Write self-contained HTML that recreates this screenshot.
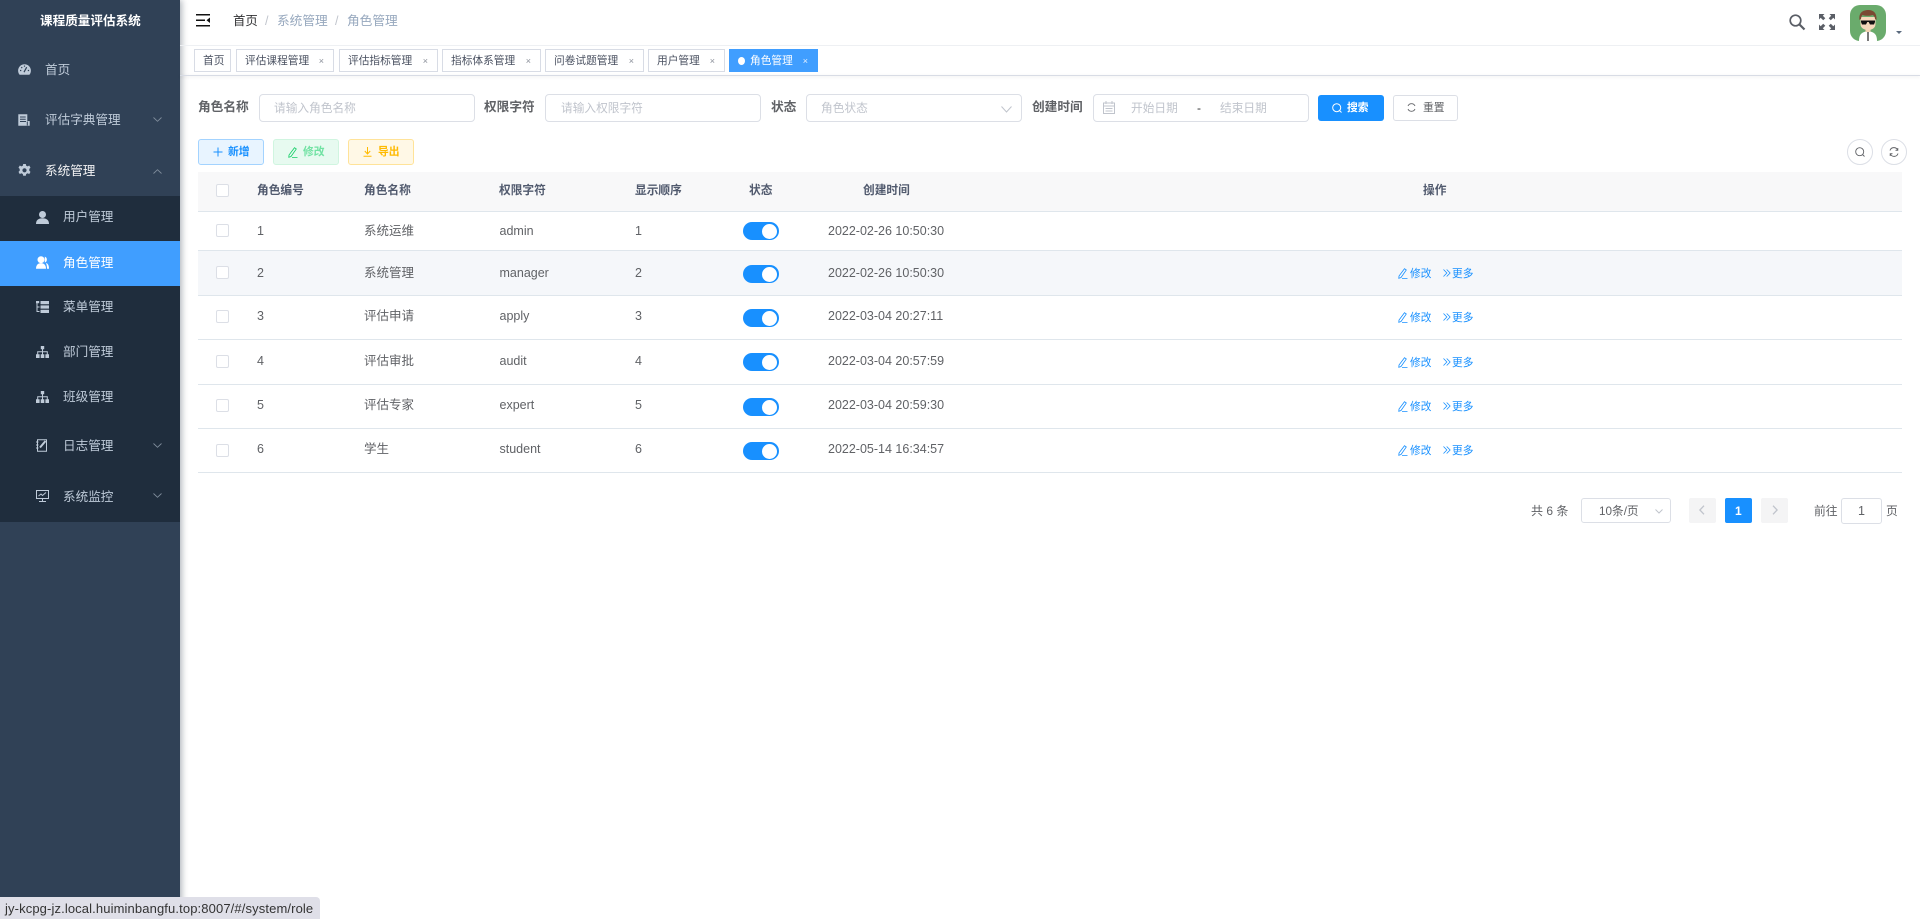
<!DOCTYPE html>
<html lang="zh-CN"><head><meta charset="utf-8"><title>角色管理</title>
<style>
html,body{margin:0;padding:0;width:1920px;height:919px;overflow:hidden;background:#fff}
body{position:relative;font-family:"Liberation Sans","Noto Sans CJK SC",sans-serif;color:#606266;font-size:12.5px}
.a{position:absolute;box-sizing:border-box}
.t{position:absolute;white-space:nowrap;line-height:20px;height:20px}
svg{position:absolute;overflow:visible}
.m{color:#bfcbd9;font-size:12.6px}
.tag{position:absolute;top:49px;height:23px;border:1px solid #d8dce5;background:#fff;color:#495060;font-size:10.7px;line-height:22px;white-space:nowrap;padding-left:8px;box-sizing:border-box}
.x{position:absolute;right:9px;top:0;font-size:9px;color:#8a8f99}
.lb{font-weight:bold;color:#606266;font-size:12.7px}
.inp{position:absolute;border:1px solid #dcdfe6;border-radius:4px;background:#fff;box-sizing:border-box}
.ph{color:#c0c4cc;font-size:11.7px}
.th{font-weight:bold;color:#515a6e;font-size:11.7px}
.ln{position:absolute;left:198px;width:1704px;height:1px;background:#dfe6ec}
.cb{position:absolute;left:216px;width:13px;height:13px;border:1px solid #dcdfe6;border-radius:2px;background:#fff;box-sizing:border-box}
.sw{position:absolute;left:743px;width:36px;height:18px;border-radius:9px;background:#1890ff}
.sw i{position:absolute;left:19px;top:1.5px;width:15px;height:15px;border-radius:50%;background:#fff}
.op{color:#1890ff;font-size:10.7px}
.pg{position:absolute;top:498px;width:27px;height:25px;border-radius:2px;background:#f4f4f5}
</style></head><body>

<!-- sidebar -->
<div class="a" style="left:0;top:0;width:180px;height:919px;background:#304156;box-shadow:2px 0 6px rgba(0,21,41,.3)"></div>
<div class="a" style="left:0;top:196px;width:180px;height:326px;background:#1f2d3d"></div>
<div class="a" style="left:0;top:241px;width:180px;height:45px;background:#409eff"></div>
<div class="t" style="left:40px;top:11px;color:#fff;font-weight:bold;font-size:12.6px">课程质量评估系统</div>

<svg style="left:18px;top:64px" width="13" height="11" viewBox="0 0 13 11"><path fill="#bfcbd9" d="M6.500.2A6.400 6.400 0 0 0 .1 6.600c0 1.600.5 3 1.500 4.200h9.800c1-1.200 1.500-2.600 1.500-4.200A6.400 6.400 0 0 0 6.500.2z"/><path stroke="#304156" stroke-width="1.200" fill="none" d="M6 8.200 8.700 3.200M2 6.500h1.300M9.800 6.500h1.300M3.300 3.200l.9.9M6.500 1.500v1.300"/></svg>
<div class="t m" style="left:45px;top:60px">首页</div>

<svg style="left:18px;top:114px" width="12" height="12" viewBox="0 0 12 12"><path fill="#bfcbd9" d="M.3.3h9v6.700h2.400v4.700H.3z"/><path stroke="#304156" stroke-width="1" fill="none" d="M2 3h5.700M2 5.200h5.700M2 7.500h6M9.300 7.500v4"/></svg>
<div class="t m" style="left:45px;top:110px">评估字典管理</div>
<svg style="left:153px;top:117px" width="9" height="5" viewBox="0 0 9 5"><path d="M.5.5l4 3.8 4-3.8" fill="none" stroke="#7f8c9b" stroke-width=".9"/></svg>

<svg style="left:18px;top:164px" width="13" height="13" viewBox="0 0 13 13"><path fill="#bfcbd9" fill-rule="evenodd" d="M5.200 0h2.600l.4 1.700 1.500.7 1.500-.9 1.300 2.200-1.200 1.200v1.800l1.200 1.200-1.300 2.200-1.500-.9-1.500.8-.4 1.700H5.200l-.4-1.700-1.500-.8-1.500.9L.5 7.900l1.200-1.200V4.900L.5 3.700l1.300-2.200 1.500.9 1.500-.7zM6.500 4.200a2.100 2.100 0 1 0 0 4.200 2.100 2.100 0 0 0 0-4.200z"/></svg>
<div class="t m" style="left:45px;top:161px;color:#f4f4f5">系统管理</div>
<svg style="left:153px;top:169px" width="9" height="5" viewBox="0 0 9 5"><path d="M.5 4.500l4-3.800 4 3.800" fill="none" stroke="#7f8c9b" stroke-width=".9"/></svg>

<svg style="left:36px;top:211px" width="13" height="13" viewBox="0 0 13 13"><circle cx="6.500" cy="3.500" r="3.500" fill="#bfcbd9"/><path fill="#bfcbd9" d="M0 13c0-3.800 2.200-5.800 6.500-5.800S13 9.200 13 13z"/></svg>
<div class="t m" style="left:63px;top:207px">用户管理</div>

<svg style="left:36px;top:256px" width="13" height="13" viewBox="0 0 13 13"><circle cx="5" cy="3.700" r="3.500" fill="#fff"/><path fill="#fff" d="M0 12.800c0-3.600 1.800-5.700 5-5.700s5 2.100 5 5.700z"/><path fill="#fff" d="M8.800.6a3.200 3.200 0 0 1 0 6zM10 7c2.100.5 3 2.700 3 5.800h-2c0-2.200-.4-4.300-1-5.800z"/></svg>
<div class="t" style="left:63px;top:253px;color:#fff;font-size:12.6px">角色管理</div>

<svg style="left:36px;top:301px" width="13" height="12" viewBox="0 0 13 12"><path fill="#bfcbd9" d="M0 0h3.200v2.200H0zM4.500 0H13v3.200H4.500zM4.500 4.400H13v3.200H4.500zM4.500 8.800H13V12H4.500z"/><path stroke="#bfcbd9" fill="none" d="M1 2v8.500h2.500M1 6h2.500"/></svg>
<div class="t m" style="left:63px;top:297px">菜单管理</div>

<svg style="left:36px;top:346px" width="13" height="12" viewBox="0 0 13 12"><path fill="#bfcbd9" d="M4.800 0h3.400v3.200H4.800zM0 8.300h3.600V12H0zM4.700 8.300h3.600V12H4.700zM9.400 8.300H13V12H9.400z"/><path stroke="#bfcbd9" fill="none" d="M6.500 3v5.500M1.700 8.500V5.700h9.600v2.800"/></svg>
<div class="t m" style="left:63px;top:342px">部门管理</div>

<svg style="left:36px;top:391px" width="13" height="12" viewBox="0 0 13 12"><path fill="#bfcbd9" d="M4.800 0h3.400v3.200H4.800zM0 8.300h3.600V12H0zM4.700 8.300h3.600V12H4.700zM9.400 8.300H13V12H9.400z"/><path stroke="#bfcbd9" fill="none" d="M6.500 3v5.500M1.700 8.500V5.700h9.600v2.800"/></svg>
<div class="t m" style="left:63px;top:387px">班级管理</div>

<svg style="left:36px;top:439px" width="12" height="13" viewBox="0 0 12 13"><path fill="none" stroke="#bfcbd9" d="M1.500.7h9v11.600h-9z"/><path stroke="#bfcbd9" stroke-width="2" d="M4 8.500 9.500 2"/><path stroke="#bfcbd9" d="M0 3h2.500M0 6h2.500M0 9h2.500"/></svg>
<div class="t m" style="left:63px;top:436px">日志管理</div>
<svg style="left:153px;top:443px" width="9" height="5" viewBox="0 0 9 5"><path d="M.5.500l4 3.800 4-3.800" fill="none" stroke="#7f8c9b" stroke-width=".9"/></svg>

<svg style="left:36px;top:490px" width="13" height="12" viewBox="0 0 13 12"><path fill="none" stroke="#bfcbd9" d="M.5.500h12v8h-12zM6.500 8.500V11.500M3 11.500h7"/><path fill="none" stroke="#bfcbd9" d="M2.500 6 5 4l1.500 1.500L10 2.500"/></svg>
<div class="t m" style="left:63px;top:487px">系统监控</div>
<svg style="left:153px;top:493px" width="9" height="5" viewBox="0 0 9 5"><path d="M.5.500l4 3.800 4-3.800" fill="none" stroke="#7f8c9b" stroke-width=".9"/></svg>

<!-- navbar -->
<svg style="left:196px;top:14px" width="14" height="13" viewBox="0 0 14 13"><path fill="#111" d="M0 0h14v1.500H0zM0 5.500h9V7H0zM0 11h14v1.500H0z"/><path fill="#111" d="M14 3.500v5.500l-3.500-2.750z"/></svg>
<div class="t" style="left:233px;top:11px;color:#303133;font-size:12.4px">首页</div>
<div class="t" style="left:265px;top:11px;color:#c0c4cc;font-size:12.5px">/</div>
<div class="t" style="left:277px;top:11px;color:#97a8be;font-size:12.7px">系统管理</div>
<div class="t" style="left:335px;top:11px;color:#c0c4cc;font-size:12.5px">/</div>
<div class="t" style="left:347px;top:11px;color:#97a8be;font-size:12.7px">角色管理</div>

<svg style="left:1789px;top:14px" width="16" height="16" viewBox="0 0 16 16"><circle cx="6.500" cy="6.500" r="5.300" fill="none" stroke="#5a5e66" stroke-width="1.700"/><path d="M10.500 10.500 15.500 15.500" stroke="#5a5e66" stroke-width="2.200"/></svg>
<svg style="left:1819px;top:14px" width="16" height="16" viewBox="0 0 16 16"><g fill="#5a5e66"><path d="M0 0h5.500L3.800 1.700 6.300 4.200 4.200 6.300 1.700 3.800 0 5.500zM16 0v5.500L14.300 3.800 11.800 6.300 9.700 4.200 12.200 1.700 10.500 0zM0 16v-5.500L1.700 12.200 4.200 9.700 6.300 11.800 3.800 14.300 5.500 16zM16 16h-5.500L12.200 14.300 9.700 11.800 11.800 9.700 14.300 12.200 16 10.500z"/></g></svg>
<svg style="left:1850px;top:5px" width="36" height="36" viewBox="0 0 36 36">
<rect width="36" height="36" rx="10" fill="#6aab6c"/>
<path fill="#fff" d="M9 36c0-7 3-9 9-10 6 1 9 3 9 10z"/><path stroke="#222" stroke-width="1.200" d="M18 27v9"/>
<rect x="15.500" y="20" width="5" height="7" fill="#f4d3b3"/>
<path fill="#f6d8bb" d="M10.500 12h15v7c0 4-3.500 6-7.500 6s-7.500-2-7.500-6z"/>
<path fill="#7a4a32" d="M9.500 15c-1-7 3-10 9-10 5 0 8.500 3 8 10l-1.500-1c0-2-1-3.500-2.500-4-3 1-7 1-10 0-1 1-1.500 3-1.500 4z"/>
<path fill="#111" d="M11 15.500h14v1.500l-1 2.500h-4l-1.300-2.500h-1.400L16 19.500h-4l-1-2.500z"/>
</svg>
<svg style="left:1896px;top:31px" width="6" height="3" viewBox="0 0 6 3"><path fill="#5a6a7e" d="M0 0h6L3 3z"/></svg>
<div class="a" style="left:180px;top:45px;width:1740px;height:1px;background:#eef0f3"></div>

<!-- tags -->
<div class="a" style="left:180px;top:75px;width:1740px;height:1px;background:#d8dce5;box-shadow:0 1px 3px rgba(0,0,0,.12)"></div>
<div class="tag" style="left:194px;width:37px">首页</div>
<div class="tag" style="left:236px;width:98px">评估课程管理<span class="x">×</span></div>
<div class="tag" style="left:339px;width:99px">评估指标管理<span class="x">×</span></div>
<div class="tag" style="left:442px;width:99px">指标体系管理<span class="x">×</span></div>
<div class="tag" style="left:545px;width:99px">问卷试题管理<span class="x">×</span></div>
<div class="tag" style="left:648px;width:77px">用户管理<span class="x">×</span></div>
<div class="tag" style="left:729px;width:89px;background:#409eff;border-color:#409eff;color:#fff;padding-left:20px"><span class="a" style="left:8px;top:7px;width:7px;height:8px;border-radius:50%;background:#fff"></span>角色管理<span class="x" style="color:#e6f1ff">×</span></div>

<!-- search form -->
<div class="t lb" style="left:198px;top:97px">角色名称</div>
<div class="inp" style="left:259px;top:94px;width:216px;height:28px"></div>
<div class="t ph" style="left:274px;top:98px;margin-top:1px">请输入角色名称</div>
<div class="t lb" style="left:484px;top:97px">权限字符</div>
<div class="inp" style="left:545px;top:94px;width:216px;height:28px"></div>
<div class="t ph" style="left:561px;top:98px;margin-top:1px">请输入权限字符</div>
<div class="t lb" style="left:771px;top:97px">状态</div>
<div class="inp" style="left:806px;top:94px;width:216px;height:28px"></div>
<div class="t ph" style="left:821px;top:98px;margin-top:1px">角色状态</div>
<svg style="left:1001px;top:106px" width="11" height="7" viewBox="0 0 11 7"><path d="M.5.500 5.500 6l5-5.500" fill="none" stroke="#c0c4cc"/></svg>
<div class="t lb" style="left:1032px;top:97px">创建时间</div>
<div class="inp" style="left:1093px;top:94px;width:216px;height:28px"></div>
<svg style="left:1103px;top:101px" width="12" height="13" viewBox="0 0 12 13"><path fill="none" stroke="#c0c4cc" d="M.5 2h11v10.500H.5zM.5 5h11M3 0v3M9 0v3M2.500 7.500h7M2.500 10h7"/></svg>
<div class="t ph" style="left:1131px;top:98px;margin-top:1px">开始日期</div>
<div class="t" style="left:1197px;top:98px;color:#303133;font-size:12px">-</div>
<div class="t ph" style="left:1220px;top:98px;margin-top:1px">结束日期</div>

<div class="a" style="left:1318px;top:95px;width:66px;height:26px;background:#1890ff;border-radius:3px"></div>
<svg style="left:1332px;top:103px" width="10" height="10" viewBox="0 0 10 10"><circle cx="4.700" cy="4.700" r="4" fill="none" stroke="#fff"/><path d="M7.500 7.500 9.500 9.500" stroke="#fff"/></svg>
<div class="t" style="left:1347px;top:98px;color:#fff;font-weight:bold;font-size:10.800px">搜索</div>
<div class="a" style="left:1393px;top:95px;width:65px;height:26px;background:#fff;border:1px solid #dcdfe6;border-radius:3px"></div>
<svg style="left:1407px;top:103px" width="9" height="9" viewBox="0 0 9 9"><path d="M1 3A3.800 3.800 0 0 1 8 3M8 6A3.800 3.800 0 0 1 1 6" fill="none" stroke="#606266" stroke-width=".9"/></svg>
<div class="t" style="left:1423px;top:98px;color:#606266;font-size:10.800px">重置</div>

<!-- toolbar -->
<div class="a" style="left:198px;top:139px;width:66px;height:26px;background:#e8f4ff;border:1px solid #a3d3ff;border-radius:3px"></div>
<svg style="left:213px;top:147px" width="10" height="10" viewBox="0 0 10 10"><path d="M5 .500v9M.500 5h9" stroke="#1890ff"/></svg>
<div class="t" style="left:228px;top:142px;color:#1890ff;font-weight:bold;font-size:10.800px">新增</div>
<div class="a" style="left:273px;top:139px;width:66px;height:26px;background:#e7faf0;border:1px solid #d0f5e0;border-radius:3px"></div>
<svg style="left:288px;top:147px" width="10" height="11" viewBox="0 0 10 11"><path d="M6.500.700 8.300 2 3 9.500.800 10.300 1 8zM4 10.400h5.500" fill="none" stroke="#13ce66" stroke-width=".8"/></svg>
<div class="t" style="left:303px;top:142px;color:#71e2a3;font-weight:bold;font-size:10.800px">修改</div>
<div class="a" style="left:348px;top:139px;width:66px;height:26px;background:#fff8e6;border:1px solid #ffe399;border-radius:3px"></div>
<svg style="left:363px;top:147px" width="9" height="10" viewBox="0 0 9 10"><path d="M4.500 0v6.500M1.800 4 4.500 7 7.200 4M.500 9.300h8" fill="none" stroke="#ffba00"/></svg>
<div class="t" style="left:378px;top:142px;color:#ffba00;font-weight:bold;font-size:10.800px">导出</div>

<div class="a" style="left:1847px;top:139px;width:26px;height:26px;border:1px solid #dcdfe6;border-radius:50%"></div>
<svg style="left:1855px;top:147px" width="10" height="10" viewBox="0 0 10 10"><circle cx="4.700" cy="4.700" r="4" fill="none" stroke="#606266" stroke-width=".9"/><path d="M7.500 7.500 9.500 9.500" stroke="#606266" stroke-width=".9"/></svg>
<div class="a" style="left:1881px;top:139px;width:26px;height:26px;border:1px solid #dcdfe6;border-radius:50%"></div>
<svg style="left:1889px;top:147px" width="10" height="10" viewBox="0 0 10 10"><path d="M1 3.500A4 4 0 0 1 8.500 3M9 6.500A4 4 0 0 1 1.500 7M8.800 1v2.300H6.500M1.200 9V6.700h2.300" fill="none" stroke="#606266" stroke-width=".9"/></svg>

<!-- table -->
<div class="a" style="left:198px;top:172px;width:1704px;height:39px;background:#f8f8f9"></div>
<div class="a" style="left:198px;top:251px;width:1704px;height:44px;background:#f5f7fa"></div>
<div class="ln" style="top:211px"></div><div class="ln" style="top:250px"></div><div class="ln" style="top:295px"></div><div class="ln" style="top:339px"></div><div class="ln" style="top:384px"></div><div class="ln" style="top:428px"></div><div class="ln" style="top:472px"></div>

<div class="cb" style="top:184px"></div>
<div class="t th" style="left:257px;top:181px">角色编号</div>
<div class="t th" style="left:364px;top:181px">角色名称</div>
<div class="t th" style="left:499px;top:181px">权限字符</div>
<div class="t th" style="left:635px;top:181px">显示顺序</div>
<div class="t th" style="left:749px;top:181px">状态</div>
<div class="t th" style="left:863px;top:181px">创建时间</div>
<div class="t th" style="left:1423px;top:181px">操作</div>

<div class="cb" style="top:224px"></div><div class="t" style="left:257px;top:221px">1</div><div class="t" style="left:364px;top:221px">系统运维</div><div class="t" style="left:499.500px;top:221px">admin</div><div class="t" style="left:635px;top:221px">1</div><div class="sw" style="top:222px"><i></i></div><div class="t" style="left:828px;top:221px">2022-02-26 10:50:30</div>

<div class="cb" style="top:266px"></div><div class="t" style="left:257px;top:263px">2</div><div class="t" style="left:364px;top:263px">系统管理</div><div class="t" style="left:499.500px;top:263px">manager</div><div class="t" style="left:635px;top:263px">2</div><div class="sw" style="top:265px"><i></i></div><div class="t" style="left:828px;top:263px">2022-02-26 10:50:30</div>

<div class="cb" style="top:310px"></div><div class="t" style="left:257px;top:306px">3</div><div class="t" style="left:364px;top:306px">评估申请</div><div class="t" style="left:499.500px;top:306px">apply</div><div class="t" style="left:635px;top:306px">3</div><div class="sw" style="top:309px"><i></i></div><div class="t" style="left:828px;top:306px">2022-03-04 20:27:11</div>

<div class="cb" style="top:355px"></div><div class="t" style="left:257px;top:351px">4</div><div class="t" style="left:364px;top:351px">评估审批</div><div class="t" style="left:499.500px;top:351px">audit</div><div class="t" style="left:635px;top:351px">4</div><div class="sw" style="top:353px"><i></i></div><div class="t" style="left:828px;top:351px">2022-03-04 20:57:59</div>

<div class="cb" style="top:399px"></div><div class="t" style="left:257px;top:395px">5</div><div class="t" style="left:364px;top:395px">评估专家</div><div class="t" style="left:499.500px;top:395px">expert</div><div class="t" style="left:635px;top:395px">5</div><div class="sw" style="top:398px"><i></i></div><div class="t" style="left:828px;top:395px">2022-03-04 20:59:30</div>

<div class="cb" style="top:444px"></div><div class="t" style="left:257px;top:439px">6</div><div class="t" style="left:364px;top:439px">学生</div><div class="t" style="left:499.500px;top:439px">student</div><div class="t" style="left:635px;top:439px">6</div><div class="sw" style="top:442px"><i></i></div><div class="t" style="left:828px;top:439px">2022-05-14 16:34:57</div>

<!-- row ops -->
<svg style="left:1398px;top:268px" width="10" height="11" viewBox="0 0 10 11"><path d="M6.500.700 8.300 2 3 9.500.800 10.300 1 8zM4 10.400h5.500" fill="none" stroke="#1890ff" stroke-width=".8"/></svg><div class="t op" style="left:1410px;top:264px">修改</div><svg style="left:1443px;top:269px" width="8" height="8" viewBox="0 0 8 8"><path d="M.5.500 3.900 4 .5 7.500M3.700.500 7.100 4 3.700 7.500" fill="none" stroke="#1890ff" stroke-width=".8"/></svg><div class="t op" style="left:1452px;top:264px">更多</div>
<svg style="left:1398px;top:312px" width="10" height="11" viewBox="0 0 10 11"><path d="M6.500.700 8.300 2 3 9.500.800 10.300 1 8zM4 10.400h5.500" fill="none" stroke="#1890ff" stroke-width=".8"/></svg><div class="t op" style="left:1410px;top:308px">修改</div><svg style="left:1443px;top:313px" width="8" height="8" viewBox="0 0 8 8"><path d="M.5.500 3.900 4 .5 7.500M3.700.500 7.100 4 3.700 7.500" fill="none" stroke="#1890ff" stroke-width=".8"/></svg><div class="t op" style="left:1452px;top:308px">更多</div>
<svg style="left:1398px;top:357px" width="10" height="11" viewBox="0 0 10 11"><path d="M6.500.700 8.300 2 3 9.500.800 10.300 1 8zM4 10.400h5.500" fill="none" stroke="#1890ff" stroke-width=".8"/></svg><div class="t op" style="left:1410px;top:353px">修改</div><svg style="left:1443px;top:358px" width="8" height="8" viewBox="0 0 8 8"><path d="M.5.500 3.900 4 .5 7.500M3.700.500 7.100 4 3.700 7.500" fill="none" stroke="#1890ff" stroke-width=".8"/></svg><div class="t op" style="left:1452px;top:353px">更多</div>
<svg style="left:1398px;top:401px" width="10" height="11" viewBox="0 0 10 11"><path d="M6.500.700 8.300 2 3 9.500.800 10.300 1 8zM4 10.400h5.500" fill="none" stroke="#1890ff" stroke-width=".8"/></svg><div class="t op" style="left:1410px;top:397px">修改</div><svg style="left:1443px;top:402px" width="8" height="8" viewBox="0 0 8 8"><path d="M.5.500 3.900 4 .5 7.500M3.700.500 7.100 4 3.700 7.500" fill="none" stroke="#1890ff" stroke-width=".8"/></svg><div class="t op" style="left:1452px;top:397px">更多</div>
<svg style="left:1398px;top:445px" width="10" height="11" viewBox="0 0 10 11"><path d="M6.500.700 8.300 2 3 9.500.800 10.300 1 8zM4 10.400h5.500" fill="none" stroke="#1890ff" stroke-width=".8"/></svg><div class="t op" style="left:1410px;top:441px">修改</div><svg style="left:1443px;top:446px" width="8" height="8" viewBox="0 0 8 8"><path d="M.5.500 3.900 4 .5 7.500M3.700.500 7.100 4 3.700 7.500" fill="none" stroke="#1890ff" stroke-width=".8"/></svg><div class="t op" style="left:1452px;top:441px">更多</div>

<!-- pagination -->
<div class="t" style="left:1531px;top:501px;font-size:12px">共 6 条</div>
<div class="inp" style="left:1581px;top:498px;width:90px;height:25px;border-radius:3px"></div>
<div class="t" style="left:1599px;top:502px;font-size:11.700px">10条/页</div>
<svg style="left:1655px;top:509px" width="8" height="5" viewBox="0 0 8 5"><path d="M.500.500 4 4l3.500-3.500" fill="none" stroke="#c0c4cc"/></svg>
<div class="pg" style="left:1689px"></div>
<svg style="left:1699px;top:505px" width="6" height="10" viewBox="0 0 6 10"><path d="M5 .700.900 5 5 9.300" fill="none" stroke="#c0c4cc" stroke-width="1.300"/></svg>
<div class="pg" style="left:1725px;background:#1890ff"></div>
<div class="t" style="left:1735px;top:501px;color:#fff;font-weight:bold;font-size:12px">1</div>
<div class="pg" style="left:1761px"></div>
<svg style="left:1772px;top:505px" width="6" height="10" viewBox="0 0 6 10"><path d="M1 .700 5.100 5 1 9.300" fill="none" stroke="#c0c4cc" stroke-width="1.300"/></svg>
<div class="t" style="left:1814px;top:501px;font-size:11.800px">前往</div>
<div class="inp" style="left:1841px;top:498px;width:41px;height:26px;border-radius:3px"></div>
<div class="t" style="left:1858px;top:501px;font-size:12.500px">1</div>
<div class="t" style="left:1886px;top:501px;font-size:11.800px">页</div>

<!-- status bubble -->
<div class="a" style="left:0;top:897px;width:320px;height:22px;background:#dfdfe8;border-top-right-radius:4px"></div>
<div class="t" style="left:5px;top:899px;color:#333;font-size:13px;letter-spacing:.12px">jy-kcpg-jz.local.huiminbangfu.top:8007/#/system/role</div>
</body></html>
